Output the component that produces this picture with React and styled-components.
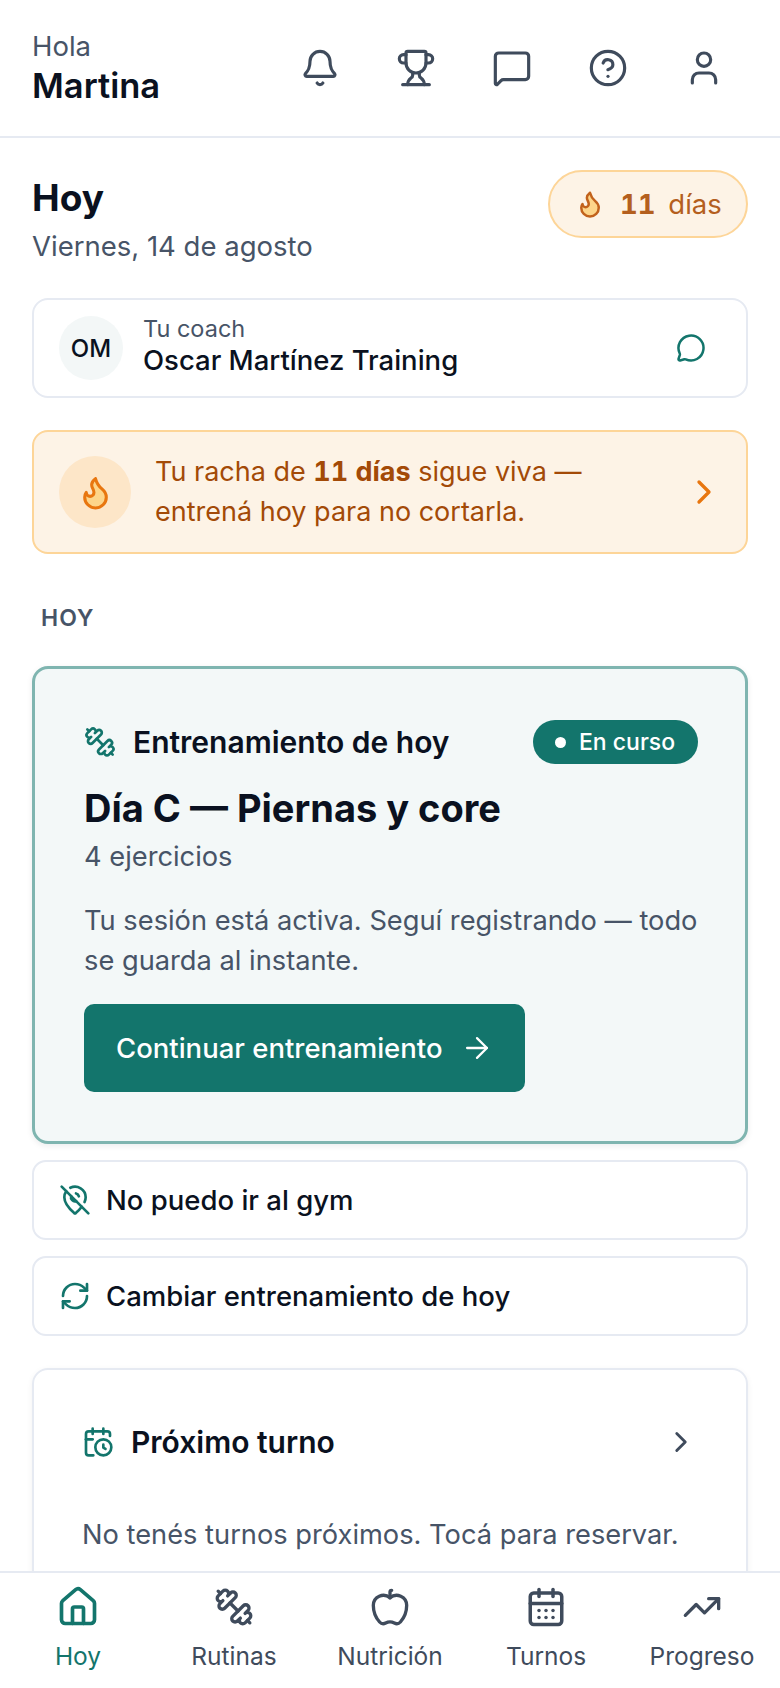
import styled, { createGlobalStyle } from "styled-components";
import {
  Apple,
  ArrowRight,
  Bell,
  CalendarClock,
  CalendarDays,
  ChevronRight,
  CircleHelp,
  Dumbbell,
  Flame,
  House,
  MapPinOff,
  MessageCircle,
  MessageSquare,
  RefreshCw,
  TrendingUp,
  Trophy,
  User,
} from "lucide-react";

const GlobalStyle = createGlobalStyle`
  * { box-sizing: border-box; }
  html, body { margin: 0; padding: 0; background: #fff; }
  body {
    font-family: Inter, "Liberation Sans", sans-serif;
    color: #0a1120;
  }
`;

// the reference has the bar running top-left to bottom-right
const FlippedDumbbell = styled(Dumbbell)`
  transform: scaleX(-1);
`;

const Screen = styled.div`
  height: 1688px;
  display: flex;
  flex-direction: column;
  overflow: hidden;
`;

const Header = styled.header`
  flex: none;
  height: 138px;
  display: flex;
  align-items: center;
  justify-content: space-between;
  padding: 0 56px 0 32px;
  border-bottom: 2px solid #e6eaf2;
`;

const Greeting = styled.div`
  display: flex;
  flex-direction: column;
  p {
    margin: 0;
    font-size: 27.5px;
    line-height: 34px;
    color: #475467;
  }
  strong {
    margin-top: 2px;
    font-size: 34.5px;
    line-height: 42px;
    font-weight: 600;
    color: #0a1120;
  }
`;

const HeaderIcons = styled.nav`
  display: flex;
  gap: 56px;
  color: #3f4b5c;
`;

const Main = styled.main`
  flex: 1;
  min-height: 0;
  overflow: hidden;
  padding: 32px 32px 0;
  display: flex;
  flex-direction: column;
  > * { flex: none; }
`;

const TitleRow = styled.div`
  min-height: 96px;
  display: flex;
  justify-content: space-between;
  align-items: flex-start;
`;

const Title = styled.h1`
  margin: 4px 0 0;
  font-size: 37px;
  line-height: 48px;
  font-weight: 700;
`;

const DateLine = styled.p`
  margin: 7px 0 0;
  font-size: 27.5px;
  line-height: 34px;
  color: #475467;
`;

const StreakPill = styled.div`
  width: 200px;
  height: 68px;
  display: flex;
  align-items: center;
  gap: 15px;
  padding-left: 25px;
  border-radius: 34px;
  background: #fdf3e6;
  border: 2px solid #fdd598;
  color: #b45f1e;
  font-size: 27.5px;
  white-space: nowrap;
  b {
    font-weight: 700;
    font-variant-numeric: tabular-nums;
    margin-right: 5px;
  }
`;

const CoachCard = styled.div`
  margin-top: 32px;
  height: 100px;
  display: flex;
  align-items: center;
  padding: 0 40px 0 25px;
  border: 2px solid #e6eaf2;
  border-radius: 16px;
`;

const Avatar = styled.div`
  width: 64px;
  height: 64px;
  flex: none;
  border-radius: 50%;
  background: #f3f7f7;
  display: flex;
  align-items: center;
  justify-content: center;
  font-size: 24px;
  font-weight: 500;
`;

const CoachText = styled.div`
  flex: 1;
  margin: -4px 0 0 20px;
  span {
    display: block;
    font-size: 23.5px;
    line-height: 28px;
    color: #475467;
  }
  strong {
    display: block;
    font-size: 27.5px;
    line-height: 34px;
    font-weight: 500;
  }
`;

const StreakBanner = styled.div`
  margin-top: 32px;
  height: 124px;
  display: flex;
  align-items: center;
  padding: 0 22px 0 25px;
  border: 2px solid #fdd598;
  border-radius: 16px;
  background: #fdf3e6;
  color: #a34a07;
  p {
    flex: 1;
    margin: 0 0 0 24px;
    font-size: 27px;
    line-height: 40px;
  }
  b {
    font-weight: 700;
    font-variant-numeric: tabular-nums;
  }
`;

const FlameBubble = styled.div`
  width: 72px;
  height: 72px;
  flex: none;
  border-radius: 50%;
  background: #fde6c8;
  display: flex;
  align-items: center;
  justify-content: center;
`;

const SectionLabel = styled.h2`
  margin: 50px 0 34px 9px;
  font-size: 23px;
  line-height: 28px;
  font-weight: 600;
  letter-spacing: 1px;
  color: #475467;
`;

const WorkoutCard = styled.section`
  height: 478px;
  padding: 51px 47px 0 49px;
  border: 3px solid #7fb5b0;
  border-radius: 16px;
  background: #f3f8f8;
  box-shadow: 0 2px 6px rgba(16, 24, 40, 0.08);
`;

const WorkoutTop = styled.div`
  display: flex;
  align-items: center;
  justify-content: space-between;
  height: 44px;
`;

const WorkoutName = styled.div`
  display: flex;
  align-items: center;
  gap: 17px;
  font-size: 30px;
  font-weight: 600;
`;

const LiveBadge = styled.span`
  width: 165px;
  height: 44px;
  padding-left: 22px;
  display: flex;
  align-items: center;
  gap: 13px;
  border-radius: 22px;
  background: #13756c;
  color: #fff;
  font-size: 23px;
  font-weight: 500;
  white-space: nowrap;
  i {
    width: 11px;
    height: 11px;
    border-radius: 50%;
    background: #fff;
  }
`;

const WorkoutTitle = styled.h3`
  margin: 20px 0 0;
  font-size: 38px;
  line-height: 48px;
  font-weight: 700;
`;

const Muted = styled.p`
  margin: ${(p) => p.$top || 0}px 0 0;
  font-size: 27.25px;
  line-height: ${(p) => p.$line || 34}px;
  color: #475467;
`;

const PrimaryButton = styled.button`
  margin-top: 23px;
  width: 441px;
  height: 88px;
  display: flex;
  align-items: center;
  gap: 17px;
  padding: 0 0 0 32px;
  border: 0;
  border-radius: 10px;
  background: #13756c;
  color: #fff;
  font: 500 27.5px Inter, sans-serif;
`;

const ActionRow = styled.button`
  margin-top: 16px;
  height: 80px;
  display: flex;
  align-items: center;
  gap: 15px;
  padding: 0 25px;
  border: 2px solid #e6eaf2;
  border-radius: 14px;
  background: #fff;
  color: #0a1120;
  font: 500 27.5px Inter, sans-serif;
  svg { color: #13756c; }
`;

const NextCard = styled.section`
  margin-top: 32px;
  padding: 50px 48px 0 48px;
  height: 260px;
  border: 2px solid #e6eaf2;
  border-radius: 16px;
  box-shadow: 0 2px 6px rgba(16, 24, 40, 0.06);
`;

const NextHead = styled.div`
  display: flex;
  align-items: center;
  gap: 17px;
  height: 44px;
  h3 {
    flex: 1;
    margin: 0;
    font-size: 30px;
    font-weight: 600;
  }
`;

const BottomNav = styled.nav`
  flex: none;
  height: 117px;
  display: grid;
  grid-template-columns: repeat(5, 1fr);
  background: #fff;
  border-top: 2px solid #e6eaf2;
  padding-top: 12px;
`;

const NavItem = styled.a`
  display: flex;
  flex-direction: column;
  align-items: center;
  gap: 13px;
  font-size: 24.5px;
  line-height: 28px;
  white-space: nowrap;
  color: ${(p) => (p.$active ? "#13756c" : "#3f4b5c")};
`;

const NavIcon = styled.span`
  width: 44px;
  height: 44px;
  display: flex;
  align-items: center;
  justify-content: center;
`;

const tabs = [
  { label: "Hoy", icon: House, size: 44, active: true },
  { label: "Rutinas", icon: FlippedDumbbell, size: 40 },
  { label: "Nutrición", icon: Apple, size: 40 },
  { label: "Turnos", icon: CalendarDays, size: 42 },
  { label: "Progreso", icon: TrendingUp, size: 40 },
];

const App = () => {
  return (
    <Screen>
      <GlobalStyle />
      <Header>
        <Greeting>
          <p>Hola</p>
          <strong>Martina</strong>
        </Greeting>
        <HeaderIcons>
          <Bell size={40} strokeWidth={1.9} />
          <Trophy size={40} strokeWidth={1.9} />
          <MessageSquare size={40} strokeWidth={1.9} />
          <CircleHelp size={40} strokeWidth={1.9} />
          <User size={40} strokeWidth={1.9} />
        </HeaderIcons>
      </Header>

      <Main>
        <TitleRow>
          <div>
            <Title>Hoy</Title>
            <DateLine>Viernes, 14 de agosto</DateLine>
          </div>
          <StreakPill>
            <Flame size={30} color="#c2621c" fill="#fdd58a" strokeWidth={2} />
            <span><b>11</b> días</span>
          </StreakPill>
        </TitleRow>

        <CoachCard>
          <Avatar>OM</Avatar>
          <CoachText>
            <span>Tu coach</span>
            <strong>Oscar Martínez Training</strong>
          </CoachText>
          <MessageCircle size={30} color="#13756c" strokeWidth={2} />
        </CoachCard>

        <StreakBanner>
          <FlameBubble>
            <Flame size={37} color="#e8760f" fill="#fdd58a" strokeWidth={2} />
          </FlameBubble>
          <p>Tu racha de <b>11 días</b> sigue viva —<br />entrená hoy para no cortarla.</p>
          <ChevronRight size={40} color="#e8760f" strokeWidth={2} />
        </StreakBanner>

        <SectionLabel>HOY</SectionLabel>

        <WorkoutCard>
          <WorkoutTop>
            <WorkoutName>
              <FlippedDumbbell size={32} color="#13756c" />
              Entrenamiento de hoy
            </WorkoutName>
            <LiveBadge><i />En curso</LiveBadge>
          </WorkoutTop>
          <WorkoutTitle>Día C — Piernas y core</WorkoutTitle>
          <Muted $top={8}>4 ejercicios</Muted>
          <Muted $top={27} $line={40}>Tu sesión está activa. Seguí registrando — todo se guarda al instante.</Muted>
          <PrimaryButton>
            Continuar entrenamiento
            <ArrowRight size={34} strokeWidth={1.6} />
          </PrimaryButton>
        </WorkoutCard>

        <ActionRow>
          <MapPinOff size={32} strokeWidth={2} />
          No puedo ir al gym
        </ActionRow>
        <ActionRow>
          <RefreshCw size={32} strokeWidth={2} />
          Cambiar entrenamiento de hoy
        </ActionRow>

        <NextCard>
          <NextHead>
            <CalendarClock size={32} color="#13756c" strokeWidth={2} />
            <h3>Próximo turno</h3>
            <ChevronRight size={34} color="#3f4b5c" strokeWidth={2} />
          </NextHead>
          <Muted $top={54}>No tenés turnos próximos. Tocá para reservar.</Muted>
        </NextCard>
      </Main>

      <BottomNav>
        {tabs.map((tab) => (
          <NavItem key={tab.label} $active={tab.active}>
            <NavIcon>
              <tab.icon size={tab.size} />
            </NavIcon>
            {tab.label}
          </NavItem>
        ))}
      </BottomNav>
    </Screen>
  );
};

export default App;
